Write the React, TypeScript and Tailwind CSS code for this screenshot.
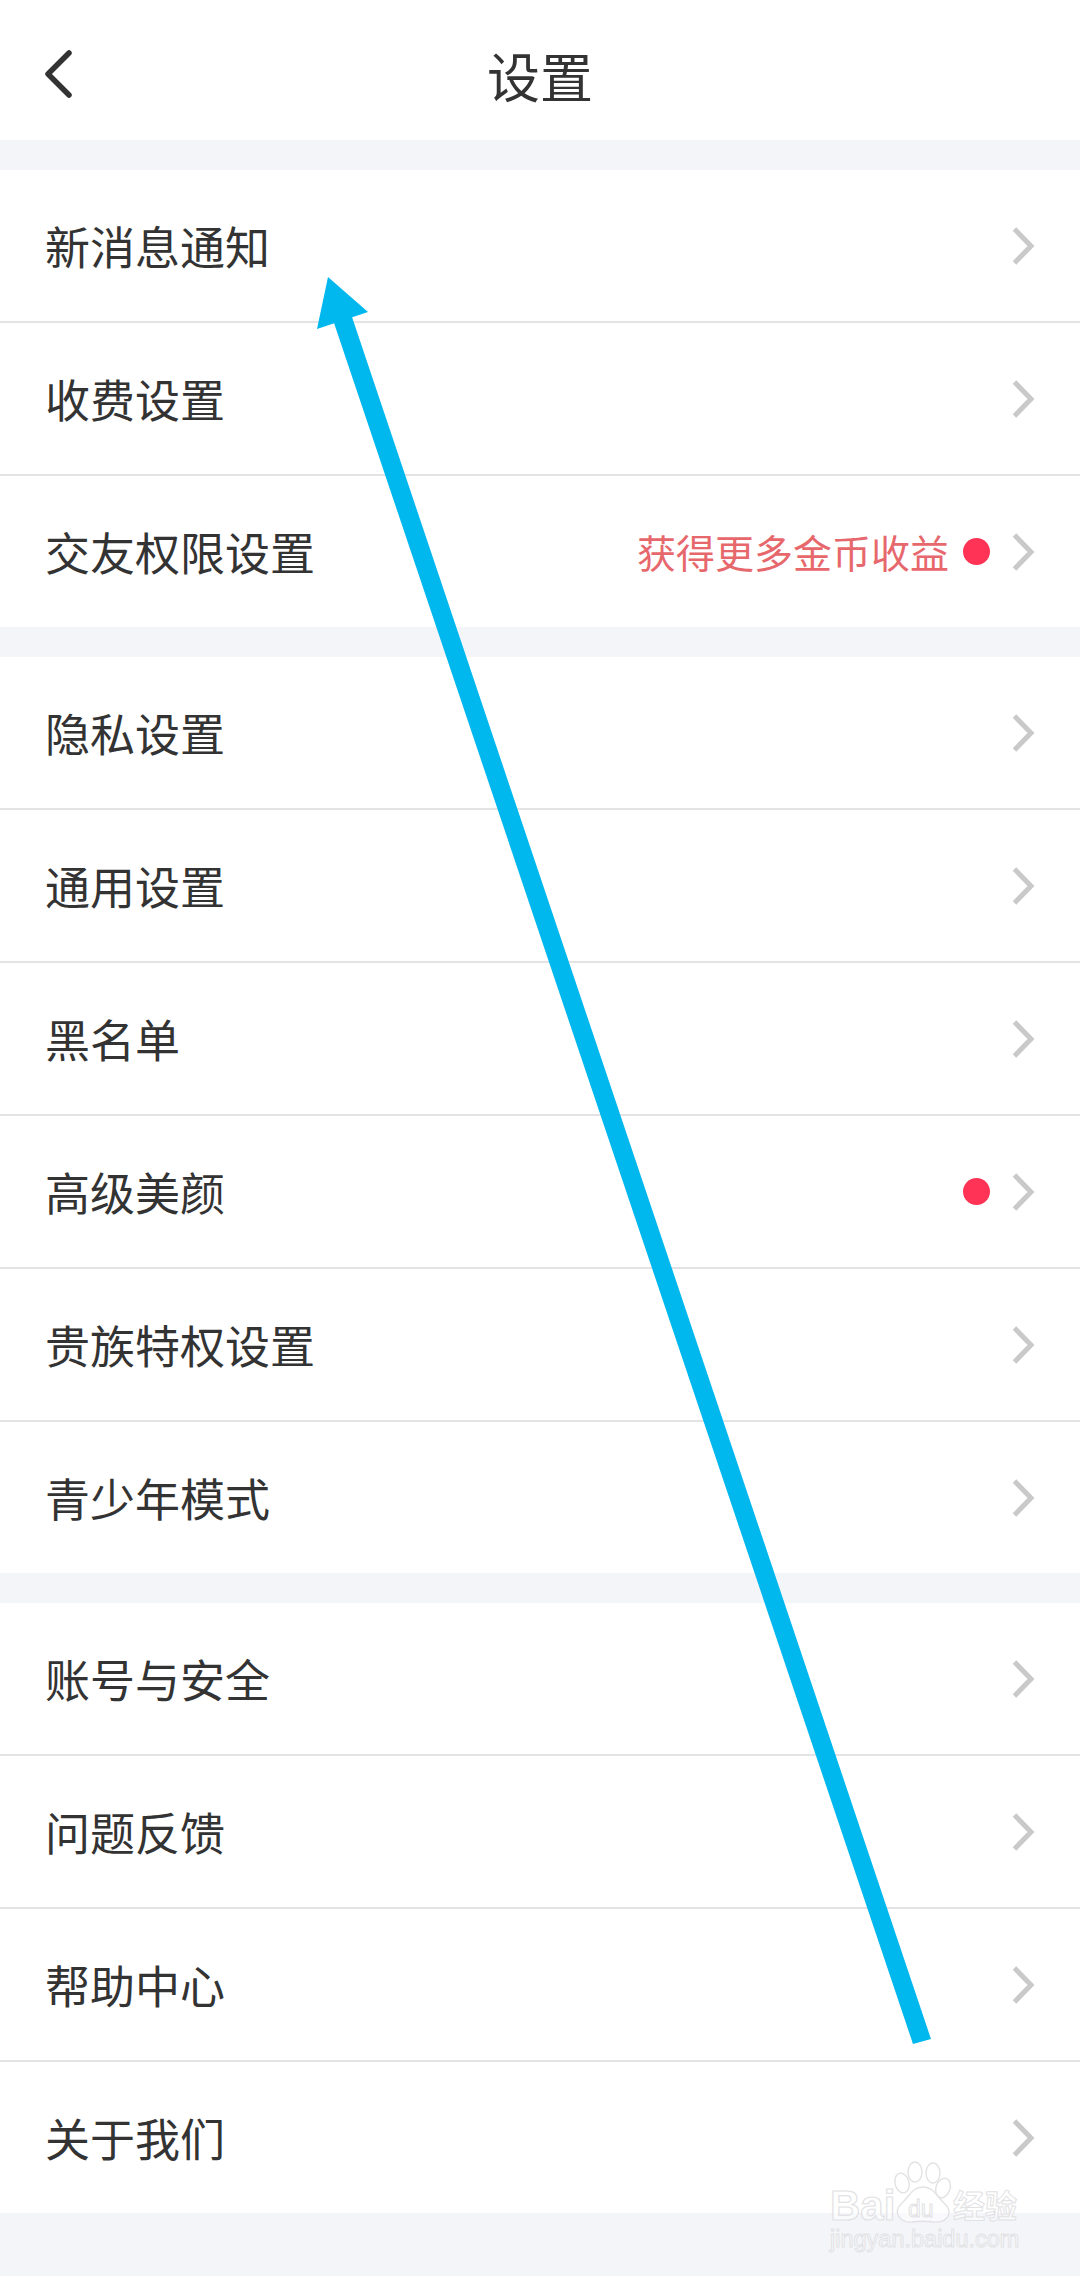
const font = { fontFamily: '"Noto Sans CJK SC", "Noto Sans", sans-serif' };

function Chevron() {
  return (
    <svg width="26" height="42" viewBox="0 0 26 42" fill="none" className="shrink-0">
      <path d="M4.5 4 L21 21 L4.5 38" stroke="#c9c9c9" strokeWidth="5" strokeLinecap="butt" strokeLinejoin="miter" />
    </svg>
  );
}

type Item = { label: string; hint?: string; dot?: boolean };

function Row({ item, last }: { item: Item; last: boolean }) {
  return (
    <div className={`flex items-center pl-[45px] pr-[44px] bg-white ${last ? 'h-[151px]' : 'h-[153px] border-b-2 border-[#e3e3e6]'}`}>
      <span className="flex-1 text-[45px] leading-none text-[#333333]">{item.label}</span>
      {item.hint && <span className="text-[39px] leading-none text-[#e7686c] mr-[14px]">{item.hint}</span>}
      {item.dot && <span className="w-[27px] h-[27px] rounded-full bg-[#ff3355] mr-[20px]" />}
      <Chevron />
    </div>
  );
}

function Group({ items }: { items: Item[] }) {
  return (
    <div className="flex flex-col">
      {items.map((it, i) => (
        <Row key={it.label} item={it} last={i === items.length - 1} />
      ))}
    </div>
  );
}

const g1: Item[] = [
  { label: '新消息通知' },
  { label: '收费设置' },
  { label: '交友权限设置', hint: '获得更多金币收益', dot: true },
];
const g2: Item[] = [
  { label: '隐私设置' },
  { label: '通用设置' },
  { label: '黑名单' },
  { label: '高级美颜', dot: true },
  { label: '贵族特权设置' },
  { label: '青少年模式' },
];
const g3: Item[] = [
  { label: '账号与安全' },
  { label: '问题反馈' },
  { label: '帮助中心' },
  { label: '关于我们' },
];

function Arrow() {
  return (
    <svg className="absolute left-0 top-0 pointer-events-none" width="1080" height="2276" viewBox="0 0 1080 2276">
      <polygon points="913,2044 931,2039 351,314 333,320" fill="#00b7ee" />
      <polygon points="328,277 368,312 317,329" fill="#00b7ee" />
    </svg>
  );
}

function Watermark() {
  const line = '#e2e2e4';
  return (
    <svg className="absolute left-[820px] top-[2150px] pointer-events-none" width="240" height="112" viewBox="0 0 240 112">
      <g fill="#ffffff" fillOpacity="0.5" stroke={line} strokeWidth="1.4">
        <ellipse cx="82" cy="33" rx="7" ry="10" transform="rotate(-15 82 33)" />
        <ellipse cx="95" cy="22" rx="7" ry="10" />
        <ellipse cx="113" cy="23" rx="7" ry="10" />
        <ellipse cx="123" cy="38" rx="7" ry="10" transform="rotate(20 123 38)" />
        <path d="M103 37 C92 37 90 46 82 53 C72 62 80 73 92 72 C100 71 106 71 114 72 C128 73 134 62 124 53 C116 46 114 37 103 37 Z" />
      </g>
      <text x="10" y="70" fontFamily="Liberation Sans, sans-serif" fontWeight="700" fontSize="42" fill="#ffffff" fillOpacity="0.5" stroke={line} strokeWidth="1.2">Bai</text>
      <text x="88" y="67" fontFamily="Liberation Sans, sans-serif" fontSize="23" fill="#ffffff" fillOpacity="0.5" stroke={line} strokeWidth="1">du</text>
      <text x="133" y="68" fontFamily='"Noto Sans CJK SC", sans-serif' fontWeight="700" fontSize="32" fill="#ffffff" fillOpacity="0.5" stroke={line} strokeWidth="1">经验</text>
      <text x="10" y="97" fontFamily="Liberation Sans, sans-serif" fontSize="23.5" fill="#ffffff" fillOpacity="0.5" stroke={line} strokeWidth="1">jingyan.baidu.com</text>
    </svg>
  );
}

export default function App() {
  return (
    <div className="relative w-[1080px] h-[2276px] overflow-hidden bg-[#f4f5f9] flex flex-col" style={font}>
      <header className="relative h-[140px] bg-white flex items-center justify-center">
        <svg className="absolute left-[41px] top-[48px]" width="34" height="52" viewBox="0 0 34 52" fill="none">
          <path d="M28 5 L7 26 L28 47" stroke="#333333" strokeWidth="5.5" strokeLinecap="round" strokeLinejoin="round" />
        </svg>
        <h1 className="text-[53px] leading-none font-normal text-[#333333] mt-[10px]">设置</h1>
      </header>
      <div className="flex flex-col gap-[30px] pt-[30px]">
        <Group items={g1} />
        <Group items={g2} />
        <Group items={g3} />
      </div>
      <Arrow />
      <Watermark />
    </div>
  );
}
